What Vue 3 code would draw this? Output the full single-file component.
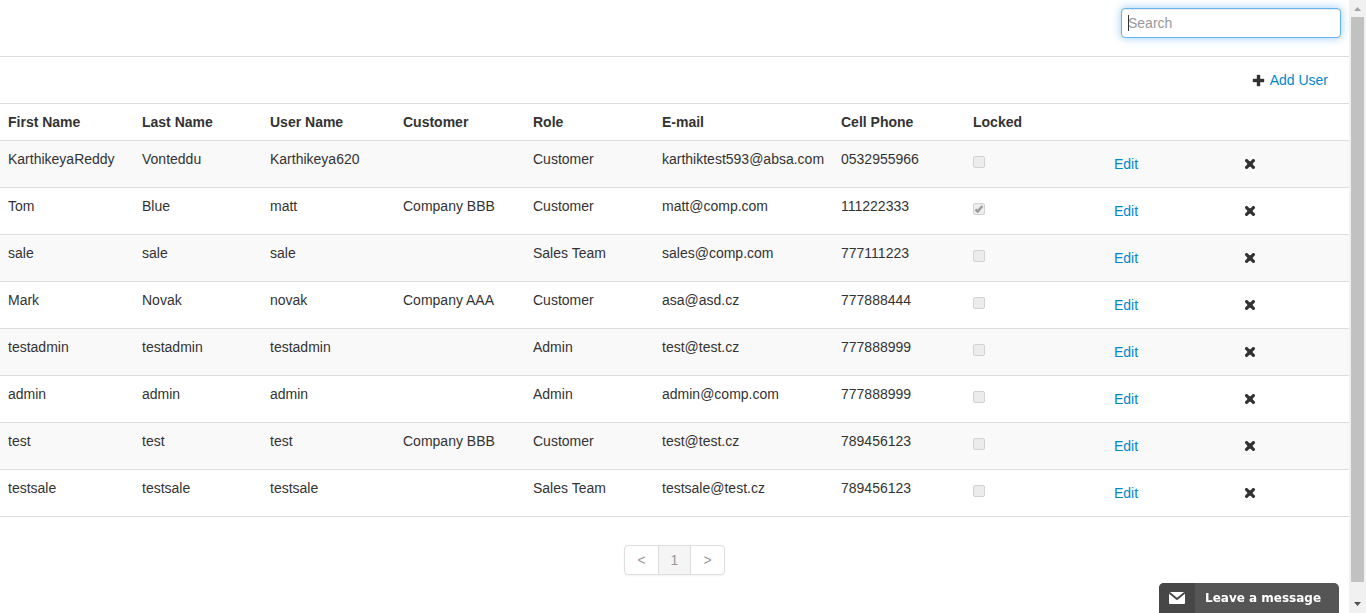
<script setup>
import { ref } from 'vue'

const query = ref('')

const columns = [
  { label: 'First Name', cls: 'c-first' },
  { label: 'Last Name', cls: 'c-last' },
  { label: 'User Name', cls: 'c-user' },
  { label: 'Customer', cls: 'c-customer' },
  { label: 'Role', cls: 'c-role' },
  { label: 'E-mail', cls: 'c-email' },
  { label: 'Cell Phone', cls: 'c-phone' },
  { label: 'Locked', cls: 'c-locked' },
  { label: '', cls: 'c-edit' },
  { label: '', cls: 'c-remove' }
]

const users = [
  { first: 'KarthikeyaReddy', last: 'Vonteddu', user: 'Karthikeya620', customer: '', role: 'Customer', email: 'karthiktest593@absa.com', phone: '0532955966', locked: false },
  { first: 'Tom', last: 'Blue', user: 'matt', customer: 'Company BBB', role: 'Customer', email: 'matt@comp.com', phone: '111222333', locked: true },
  { first: 'sale', last: 'sale', user: 'sale', customer: '', role: 'Sales Team', email: 'sales@comp.com', phone: '777111223', locked: false },
  { first: 'Mark', last: 'Novak', user: 'novak', customer: 'Company AAA', role: 'Customer', email: 'asa@asd.cz', phone: '777888444', locked: false },
  { first: 'testadmin', last: 'testadmin', user: 'testadmin', customer: '', role: 'Admin', email: 'test@test.cz', phone: '777888999', locked: false },
  { first: 'admin', last: 'admin', user: 'admin', customer: '', role: 'Admin', email: 'admin@comp.com', phone: '777888999', locked: false },
  { first: 'test', last: 'test', user: 'test', customer: 'Company BBB', role: 'Customer', email: 'test@test.cz', phone: '789456123', locked: false },
  { first: 'testsale', last: 'testsale', user: 'testsale', customer: '', role: 'Sales Team', email: 'testsale@test.cz', phone: '789456123', locked: false }
]
</script>

<template>
  <div class="page">
    <main class="content">
      <div class="search-bar">
        <div class="search">
          <input v-model="query" type="text" placeholder="Search" aria-label="Search" />
          <span class="caret" aria-hidden="true"></span>
        </div>
      </div>

      <div class="actions">
        <a class="add" href="#">
          <svg width="14" height="14" viewBox="0 0 14 14" aria-hidden="true">
            <path d="M5 2h3v4h4v3H8v4H5V9H1V6h4z" fill="#333" stroke="#333" stroke-width=".4" />
          </svg>
          <span>Add User</span>
        </a>
      </div>

      <table>
        <colgroup>
          <col v-for="c in columns" :key="c.cls" :class="c.cls" />
        </colgroup>
        <thead>
          <tr>
            <th v-for="c in columns" :key="c.cls" scope="col">{{ c.label }}</th>
          </tr>
        </thead>
        <tbody>
          <tr v-for="u in users" :key="u.user">
            <td>{{ u.first }}</td>
            <td>{{ u.last }}</td>
            <td>{{ u.user }}</td>
            <td>{{ u.customer }}</td>
            <td>{{ u.role }}</td>
            <td>{{ u.email }}</td>
            <td>{{ u.phone }}</td>
            <td>
              <span class="tick">
                <input type="checkbox" :checked="u.locked" disabled :aria-label="'Locked: ' + u.user" />
                <svg v-if="u.locked" width="12" height="12" viewBox="0 0 12 12" aria-hidden="true">
                  <path d="M2.5 6.5L4.7 8.5L9.3 3" fill="none" stroke="#999" stroke-width="2.4" />
                </svg>
              </span>
            </td>
            <td><a class="edit" href="#">Edit</a></td>
            <td>
              <button class="remove" type="button" :aria-label="'Remove ' + u.user">
                <svg width="12" height="10" viewBox="0 0 12 10" aria-hidden="true">
                  <path d="M2.600 1.600L9.400 8.400M9.400 1.600L2.600 8.400" fill="none" stroke="#333" stroke-width="3.200" stroke-linecap="round" />
                  <rect x="3.500" y="2.500" width="5" height="5" fill="#333" />
                </svg>
              </button>
            </td>
          </tr>
        </tbody>
      </table>

      <nav class="pages" aria-label="Pages">
        <a href="#" aria-label="Previous">&lt;</a>
        <a class="current" href="#" aria-current="page">1</a>
        <a href="#" aria-label="Next">&gt;</a>
      </nav>
    </main>

    <div class="scrollbar" aria-hidden="true">
      <svg width="17" height="17" viewBox="0 0 17 17"><path d="M5 11L8.500 7L12 11z" fill="#a3a3a3" /></svg>
      <div class="thumb"></div>
      <svg class="down" width="17" height="17" viewBox="0 0 17 17"><path d="M5 6L8.500 10L12 6z" fill="#505050" /></svg>
    </div>

    <button class="chat" type="button">
      <span class="chat-icon">
        <svg width="16" height="12" viewBox="0 0 16 12" aria-hidden="true">
          <rect width="16" height="12" rx="1" fill="#fff" />
          <path d="M0 .5L8 7L16 .5" fill="none" stroke="#474747" stroke-width="2" />
        </svg>
      </span>
      <span class="chat-label">Leave a message</span>
    </button>
  </div>
</template>

<style>
body {
  margin: 0;
  background: #fff;
}
</style>

<style scoped>
.page {
  display: flex;
  height: 100vh;
  overflow: hidden;
  font-family: "Liberation Sans", Arial, sans-serif;
  font-size: 14px;
  line-height: 20px;
  color: #333;
}
.content {
  flex: 1;
  min-width: 0;
}
.search-bar {
  display: flex;
  justify-content: flex-end;
  padding: 8px 8px 18px;
}
.search {
  position: relative;
  width: 220px;
}
.search input {
  display: block;
  box-sizing: border-box;
  width: 100%;
  height: 30px;
  padding: 4px 6px;
  border: 1px solid #66b2ec;
  border-radius: 4px;
  outline: 0;
  background: #fff;
  box-shadow: inset 0 1px 1px rgba(0, 0, 0, 0.08), 0 0 8px rgba(82, 168, 236, 0.6);
  color: #555;
  font: inherit;
}
.search input::placeholder {
  color: #999;
  opacity: 1;
}
.caret {
  position: absolute;
  left: 7px;
  top: 7px;
  width: 1px;
  height: 16px;
  background: #333;
}
.actions {
  display: flex;
  justify-content: flex-end;
  padding: 8px;
  border-top: 1px solid #ddd;
}
.add {
  display: flex;
  align-items: center;
  gap: 4px;
  padding: 5px 13px;
}
a {
  color: #08c;
  text-decoration: none;
}
table {
  width: 100%;
  table-layout: fixed;
  border-spacing: 0;
  border-bottom: 1px solid #ddd;
}
.c-first { width: 134px; }
.c-last { width: 128px; }
.c-user { width: 133px; }
.c-customer { width: 130px; }
.c-role { width: 129px; }
.c-email { width: 179px; }
.c-phone { width: 132px; }
.c-locked { width: 141px; }
.c-edit { width: 130px; }
.c-remove { width: 113px; }
th,
td {
  padding: 8px;
  border-top: 1px solid #ddd;
  text-align: left;
  vertical-align: top;
}
tbody tr:nth-child(odd) {
  background: #f9f9f9;
}
.tick {
  position: relative;
  display: block;
  width: 12px;
  margin-top: 7px;
}
.tick input {
  display: block;
  appearance: none;
  box-sizing: border-box;
  width: 12px;
  height: 12px;
  margin: 0;
  border: 1px solid #d2d2d2;
  border-radius: 2px;
  background: #ececec;
}
.tick svg {
  position: absolute;
  left: 0;
  top: 0;
}
.edit {
  display: block;
  padding: 5px 0;
}
.remove {
  display: flex;
  align-items: center;
  height: 30px;
  padding: 0;
  border: 0;
  background: none;
}
.pages {
  display: flex;
  width: fit-content;
  margin: 28px auto 0;
  border: 1px solid #ddd;
  border-radius: 4px;
  box-shadow: 0 1px 2px rgba(0, 0, 0, 0.05);
}
.pages a {
  padding: 4px 12px;
  color: #999;
}
.pages a + a {
  border-left: 1px solid #ddd;
}
.pages .current {
  background: #f5f5f5;
}
.scrollbar {
  display: flex;
  flex-direction: column;
  width: 17px;
  background: #f1f1f1;
}
.thumb {
  flex: 1;
  margin: 0 2px;
  background: #c1c1c1;
}
.down {
  margin-top: 14px;
}
.chat {
  position: fixed;
  right: 27px;
  bottom: 0;
  display: flex;
  height: 30px;
  width: 180px;
  padding: 0;
  overflow: hidden;
  border: 0;
  border-radius: 5px 5px 0 0;
  background: #555;
  color: #fff;
  font: bold 12px/30px "DejaVu Sans", Verdana, sans-serif;
}
.chat-icon {
  display: flex;
  align-items: center;
  justify-content: center;
  width: 36px;
  height: 30px;
  background: #474747;
}
.chat-label {
  padding-left: 10px;
}
</style>
